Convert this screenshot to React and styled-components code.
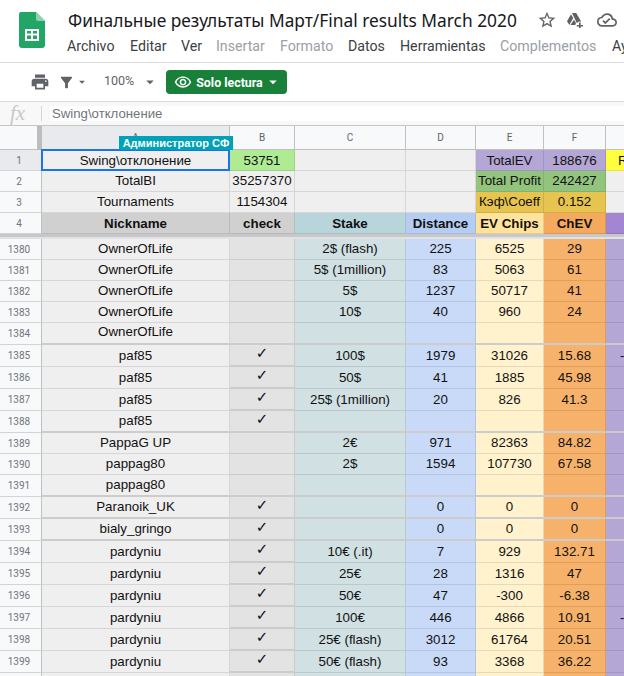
import React from "react";
import styled, { createGlobalStyle } from "styled-components";
import { MdPrint, MdStarBorder, MdOutlineCloudDone, MdArrowDropDown, MdOutlineRemoveRedEye, MdFilterAlt } from "react-icons/md";

const GlobalStyle = createGlobalStyle`
  html, body { margin: 0; padding: 0; background: #fff; overflow: hidden; }
  body { width: 624px; height: 676px; font-family: "Liberation Sans", Arial, sans-serif; }
  * { box-sizing: border-box; }
`;

const columns = [188, 65, 111, 70, 68, 62, 40];
const menu = [
  { label: "Archivo", w: 63 },
  { label: "Editar", w: 51 },
  { label: "Ver", w: 35 },
  { label: "Insertar", w: 64, off: true },
  { label: "Formato", w: 68, off: true },
  { label: "Datos", w: 52 },
  { label: "Herramientas", w: 100 },
  { label: "Complementos", w: 112, off: true },
  { label: "Ayuda", w: 50 },
];

const top = [
  { n: 1, pad: 1, selected: true, cells: ["Swing\\отклонение", "53751", "", "", "TotalEV", "188676", "R"], bg: ["#efefef", "#aeeb93", "#efefef", "#efefef", "#b4a7d6", "#b4a7d6", "#ffff40"] },
  { n: 2, pad: 2, cells: ["TotalBI", "35257370", "", "", "Total Profit", "242427", ""], bg: ["#efefef", "#efefef", "#efefef", "#efefef", "#93c47d", "#93c47d", "#efefef"] },
  { n: 3, pad: 2, cells: ["Tournaments", "1154304", "", "", "Кэф\\Coeff", "0.152", ""], bg: ["#efefef", "#efefef", "#efefef", "#efefef", "#e6c44f", "#e6c44f", "#efefef"] },
  { n: 4, pad: 1, bold: true, cells: ["Nickname", "check", "Stake", "Distance", "EV Chips", "ChEV", ""], bg: ["#d0d0d0", "#d0d0d0", "#b7d5da", "#b6cdf3", "#ffe29c", "#f4a95c", "#a285d3"] },
];

// [row number, height, nickname, check, stake, distance, ev, chev, last col, thick line, bottom pad]
const body = [
  [1380, 21, "OwnerOfLife", "", "2$ (flash)", "225", "6525", "29"],
  [1381, 21, "OwnerOfLife", "", "5$ (1million)", "83", "5063", "61"],
  [1382, 21, "OwnerOfLife", "", "5$", "1237", "50717", "41"],
  [1383, 21, "OwnerOfLife", "", "10$", "40", "960", "24"],
  [1384, 22, "OwnerOfLife", "", "", "", "", "", "", true, 3],
  [1385, 22, "paf85", "✓", "100$", "1979", "31026", "15.68", "-"],
  [1386, 22, "paf85", "✓", "50$", "41", "1885", "45.98"],
  [1387, 22, "paf85", "✓", "25$ (1million)", "20", "826", "41.3"],
  [1388, 22, "paf85", "✓", "", "", "", "", "", true],
  [1389, 21, "PappaG UP", "", "2€", "971", "82363", "84.82"],
  [1390, 21, "pappag80", "", "2$", "1594", "107730", "67.58"],
  [1391, 22, "pappag80", "", "", "", "", "", "", true],
  [1392, 22, "Paranoik_UK", "✓", "", "0", "0", "0", "", true],
  [1393, 22, "bialy_gringo", "✓", "", "0", "0", "0", "", true],
  [1394, 22, "pardyniu", "✓", "10€ (.it)", "7", "929", "132.71"],
  [1395, 22, "pardyniu", "✓", "25€", "28", "1316", "47"],
  [1396, 22, "pardyniu", "✓", "50€", "47", "-300", "-6.38"],
  [1397, 22, "pardyniu", "✓", "100€", "446", "4866", "10.91", "-"],
  [1398, 22, "pardyniu", "✓", "25€ (flash)", "3012", "61764", "20.51"],
  [1399, 22, "pardyniu", "✓", "50€ (flash)", "93", "3368", "36.22"],
  ["", 22, "", "", "", "", "", ""],
];
const bodyBg = ["#efefef", "#e3e3e3", "#d0e0e3", "#c9daf8", "#fff2cc", "#f6b26b", "#b4a7d6"];

const Page = styled.div`
  width: 624px;
  height: 676px;
  overflow: hidden;
  position: relative;
`;

const Header = styled.header`
  height: 63px;
  display: flex;
  border-bottom: 1px solid #dadce0;
`;

const Logo = styled.div`
  width: 68px;
  padding: 12px 0 0 19px;
`;

const TitleBlock = styled.div`
  flex: 1;
  min-width: 0;
`;

const TitleRow = styled.div`
  display: flex;
  align-items: center;
  height: 20px;
  margin-top: 10px;
  white-space: nowrap;
`;

const Title = styled.div`
  flex: 0 0 469px;
  font-family: "Noto Sans", sans-serif;
  font-size: 17.35px;
  color: #17191c;
`;

const TitleIcon = styled.span`
  display: flex;
  flex: 0 0 30px;
  color: #5f6368;
  font-size: 20px;
`;

const Menu = styled.nav`
  display: flex;
  margin: 7px 0 0 -1px;
  white-space: nowrap;
`;

const MenuItem = styled.span`
  flex: 0 0 ${(p) => p.$w}px;
  font-family: Roboto, sans-serif;
  font-size: 14.2px;
  line-height: 18px;
  color: ${(p) => (p.$off ? "#9aa0a6" : "#3c4043")};
`;

const Toolbar = styled.div`
  height: 39px;
  display: flex;
  align-items: center;
  padding-left: 30px;
  border-bottom: 1px solid #dadce0;
  color: #5f6368;
`;

const ToolIcon = styled.span`
  display: flex;
  font-size: ${(p) => p.$size || 20}px;
  margin-right: ${(p) => p.$gap || 0}px;
  color: #5f6368;
`;

const Zoom = styled.span`
  font-family: Roboto, sans-serif;
  font-size: 12.5px;
  color: #5f6368;
  margin: -3px 7px 0 0;
`;

const ReadOnly = styled.div`
  width: 121px;
  height: 24px;
  display: flex;
  align-items: center;
  padding-left: 8px;
  background: #188038;
  border-radius: 4px;
  color: #fff;
  font-family: Roboto, sans-serif;
  font-size: 12.4px;
  font-weight: 700;
`;

const ReadOnlyLabel = styled.span`
  margin: 0 1px 0 4px;
`;

const FormulaBar = styled.div`
  height: 24px;
  display: flex;
  background: #f8f8f8;
  padding: 4px 0;
  border-bottom: 1px solid #c4c7c5;
`;

const Fx = styled.div`
  width: 42px;
  height: 15px;
  padding-left: 10px;
  border-right: 1px solid #d4d4d4;
  font-family: "Liberation Serif", serif;
  font-style: italic;
  font-size: 21px;
  line-height: 15px;
  color: #c8c8c8;
`;

const FormulaText = styled.div`
  flex: 1;
  height: 15px;
  margin-left: 8px;
  padding-left: 2px;
  background: #fff;
  font-family: "Liberation Sans", sans-serif;
  font-size: 13.2px;
  line-height: 15px;
  color: #70757a;
`;

const Grid = styled.div`
  position: relative;
`;

const Row = styled.div`
  display: flex;
  height: ${(p) => p.$h}px;
`;

const Corner = styled.div`
  flex: 0 0 42px;
  background: #f8f9fa;
  border-right: 5px solid #bdbdbd;
  border-bottom: 1px solid #c0c0c0;
`;

const ColHead = styled.div`
  flex: 0 0 ${(p) => p.$w}px;
  display: flex;
  justify-content: center;
  align-items: center;
  background: ${(p) => (p.$active ? "#e8eaed" : "#f8f9fa")};
  border-right: 1px solid #c0c0c0;
  border-bottom: 1px solid #c0c0c0;
  font-family: Roboto, sans-serif;
  font-size: 10px;
  color: #5f6368;
`;

const RowHead = styled.div`
  flex: 0 0 42px;
  display: flex;
  justify-content: center;
  align-items: center;
  padding-right: 3px;
  background: ${(p) => (p.$active ? "#e8eaed" : "#f8f9fa")};
  border-right: 1px solid #c0c0c0;
  border-bottom: 1px solid #d4d4d4;
  font-family: Roboto, sans-serif;
  font-size: 10px;
  color: #70757a;
`;

const Cell = styled.div`
  flex: 0 0 ${(p) => p.$w}px;
  display: flex;
  justify-content: ${(p) => (p.$left ? "flex-start" : "center")};
  align-items: flex-end;
  padding: 0 0 ${(p) => p.$pad}px ${(p) => p.$left || 0}px;
  background: ${(p) => p.$bg};
  border-right: 1px solid rgba(0, 0, 0, 0.1);
  border-bottom: ${(p) => (p.$thick ? "2px solid #cccccc" : "1px solid rgba(0, 0, 0, 0.1)")};
  font-family: "Liberation Sans", sans-serif;
  font-size: 13.33px;
  line-height: 16px;
  font-weight: ${(p) => (p.$bold ? 700 : 400)};
  color: #111;
  white-space: nowrap;
  overflow: hidden;
`;

const Check = styled.span`
  font-family: "DejaVu Sans", sans-serif;
  font-size: 15px;
  line-height: 18px;
  margin-bottom: 1px;
`;

const FrozenBar = styled.div`
  height: 5px;
  background: linear-gradient(#c8c8c8 0 3px, #e0e2e6 3px);
`;

const Selection = styled.div`
  position: absolute;
  left: 41px;
  top: 23px;
  width: 189px;
  height: 22px;
  border: 2px solid #1a73e8;
`;

const Tag = styled.div`
  position: absolute;
  left: 119px;
  top: 10px;
  width: 114px;
  height: 14px;
  background: #00a2b8;
  color: #fff;
  font-family: "Liberation Sans", sans-serif;
  font-size: 11px;
  font-weight: 700;
  line-height: 14px;
  text-align: center;
  white-space: nowrap;
`;

const SheetLogo = () => (
  <svg width="26" height="36" viewBox="0 0 26 36">
    <path d="M2 0h15l9 9v24a3 3 0 0 1-3 3H3a3 3 0 0 1-3-3V2a2 2 0 0 1 2-2z" fill="#23a566" />
    <path d="M17 0l9 9h-7a2 2 0 0 1-2-2z" fill="#8ed1b1" />
    <path d="M6 17h14v12H6zm2 2v2.5h4V19zm6 0v2.5h4V19zm-6 4.5V27h4v-3.5zm6 0V27h4v-3.5z" fill="#fff" fillRule="evenodd" />
  </svg>
);

const DriveIcon = () => (
  <svg width="17" height="15" viewBox="0 0 17 15" fill="#5f6368">
    <path d="M5 0h4.2l5 8.4H12.5a4 4 0 0 0-2.6 1.8zM4 1.2 6.2 5 2.3 12 0 8.2zM7 6.8l2 3.1-.7 2.1H3.4z" />
    <path d="M12 9.5h1.7V12H16v1.6h-2.3V15H12v-1.4H9.8V12H12z" />
  </svg>
);

const fit = (v) => (v === "✓" ? <Check>{v}</Check> : v);

export default function App() {
  const heads = ["A", "B", "C", "D", "E", "F", ""];
  return (
    <Page>
      <GlobalStyle />
      <Header>
        <Logo><SheetLogo /></Logo>
        <TitleBlock>
          <TitleRow>
            <Title>Финальные результаты Март/Final results March 2020</Title>
            <TitleIcon><MdStarBorder /></TitleIcon>
            <TitleIcon><DriveIcon /></TitleIcon>
            <TitleIcon><MdOutlineCloudDone /></TitleIcon>
          </TitleRow>
          <Menu>
            {menu.map((m) => (
              <MenuItem key={m.label} $w={m.w} $off={m.off}>{m.label}</MenuItem>
            ))}
          </Menu>
        </TitleBlock>
      </Header>
      <Toolbar>
        <ToolIcon $size={20} $gap={8}><MdPrint /></ToolIcon>
        <ToolIcon $size={17}><MdFilterAlt /></ToolIcon>
        <ToolIcon $size={14} $gap={15}><MdArrowDropDown /></ToolIcon>
        <Zoom>100%</Zoom>
        <ToolIcon $size={18} $gap={7}><MdArrowDropDown /></ToolIcon>
        <ReadOnly>
          <MdOutlineRemoveRedEye size={18} />
          <ReadOnlyLabel>Solo lectura</ReadOnlyLabel>
          <MdArrowDropDown size={18} />
        </ReadOnly>
      </Toolbar>
      <FormulaBar>
        <Fx>fx</Fx>
        <FormulaText>Swing\отклонение</FormulaText>
      </FormulaBar>
      <Grid>
        <Row $h={24}>
          <Corner />
          {columns.map((w, i) => (
            <ColHead key={i} $w={w} $active={i === 0}>{heads[i]}</ColHead>
          ))}
        </Row>
        {top.map((r) => (
          <Row key={r.n} $h={21}>
            <RowHead $active={r.selected}>{r.n}</RowHead>
            {columns.map((w, i) => (
              <Cell key={i} $w={w} $bg={r.bg[i]} $bold={r.bold} $pad={r.pad} $left={i === 6 ? 12 : 0}>{r.cells[i]}</Cell>
            ))}
          </Row>
        ))}
        <FrozenBar />
        {body.map((r, n) => (
          <Row key={n} $h={r[1]}>
            <RowHead>{r[0]}</RowHead>
            {columns.map((w, i) => (
              <Cell
                key={i}
                $w={w}
                $bg={bodyBg[i]}
                $thick={r[9] || (i === 1 && r[3] !== "")}
                $pad={r[10] || (r[9] ? 2 : 2)}
                $left={i === 6 ? 14 : 0}
              >
                {fit(r[i + 2] || "")}
              </Cell>
            ))}
          </Row>
        ))}
        <Selection />
        <Tag>Администратор СФ</Tag>
      </Grid>
    </Page>
  );
}
